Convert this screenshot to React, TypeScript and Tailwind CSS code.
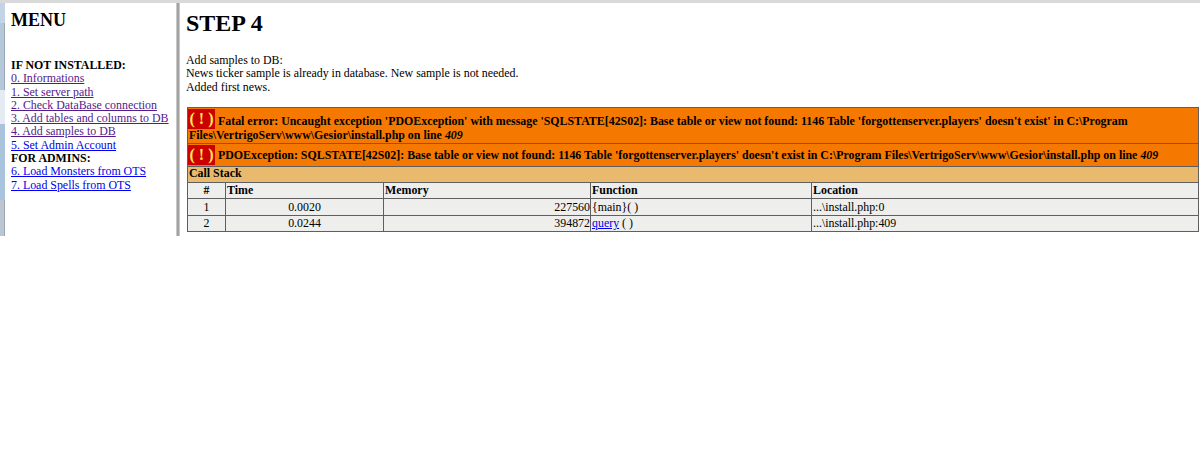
const menuTop = [
  ["0. Informations", true],
  ["1. Set server path", true],
  ["2. Check DataBase connection", true],
  ["3. Add tables and columns to DB", true],
  ["4. Add samples to DB", true],
  ["5. Set Admin Account", false],
] as const

const menuAdmin = ["6. Load Monsters from OTS", "7. Load Spells from OTS"]

function MenuLink({ label, visited }: { label: string; visited: boolean }) {
  return (
    <a href="#" className={visited ? "block h-[13.3px] underline text-[#551a8b]" : "block h-[13.3px] underline text-[#0000ee]"}>
      {label}
    </a>
  )
}

function ErrorIcon({ low }: { low?: boolean }) {
  return (
    <span className={low
      ? "-ml-[1px] inline-block h-[20px] w-[27px] bg-[#cc0000] text-center align-[-1px] text-[16px] leading-[20px] font-bold whitespace-nowrap text-[#fce94f]"
      : "-ml-[1px] inline-block h-[20px] w-[27px] bg-[#cc0000] text-center align-[1px] text-[16px] leading-[20px] font-bold whitespace-nowrap text-[#fce94f]"}>
      ( ! )
    </span>
  )
}

export default function App() {
  return (
    <div className="h-[468px] w-[1200px] overflow-hidden bg-white font-['Liberation_Serif',serif] text-[11.9px] leading-[13.3px] text-black">
      <div className="h-[3px] bg-[#d9d9d9]" />
      <div className="flex h-[233px]">
        {/* sliver of the window behind the page */}
        <div className="flex w-[5px] flex-col">
          <div className="h-[20px] bg-[#c3d4e6]" />
          <div className="h-[33px] border-r border-[#9aa7b4] bg-[#b5c8da]" />
          <div className="h-[34px] border-r border-[#9aa7b4] bg-[#b5c8da]" />
          <div className="h-[34px] bg-[#e4ebf2]" />
          <div className="h-[76px] bg-[#a9c3dc]" />
          <div className="flex-1 border-r border-[#9aa7b4] bg-[#bcc6d0]" />
        </div>
        <aside className="w-[171px] pl-[6px]">
          <h2 className="mt-[7px] text-[18px] leading-[20px] font-bold">MENU</h2>
          <div className="mt-[29px] font-bold">IF NOT INSTALLED:</div>
          {menuTop.map(([label, visited]) => (
            <MenuLink key={label} label={label} visited={visited} />
          ))}
          <div className="font-bold">FOR ADMINS:</div>
          {menuAdmin.map((label) => (
            <MenuLink key={label} label={label} visited={false} />
          ))}
        </aside>
        <div className="w-[4px] border-x border-[#c8c8c8] bg-[#a3a3a3]" />
        <main className="flex-1 pl-[6px]">
          <h1 className="mt-[7px] text-[24px] leading-[27px] font-bold">STEP 4</h1>
          <div className="mt-[17px]">
            <div>Add samples to DB:</div>
            <div>News ticker sample is already in database. New sample is not needed.</div>
            <div>Added first news.</div>
          </div>
          <table className="mt-[13px] ml-[1px] w-[1012px] table-fixed border-collapse border border-[#5f5f5f]">
            <colgroup>
              <col className="w-[38px]" />
              <col className="w-[158px]" />
              <col className="w-[207px]" />
              <col className="w-[221px]" />
              <col />
            </colgroup>
            <tbody>
              <tr className="bg-[#f57900]">
                <td colSpan={5} className="border border-[#5f5f5f] px-[1px] pt-[1px] pb-[1px] align-top leading-[13px] font-bold">
                  <ErrorIcon /> Fatal error: Uncaught exception 'PDOException' with message 'SQLSTATE[42S02]: Base table or view not found: 1146 Table 'forgottenserver.players' doesn't exist' in C:\Program Files\VertrigoServ\www\Gesior\install.php on line <i>409</i>
                </td>
              </tr>
              <tr className="bg-[#f57900]">
                <td colSpan={5} className="border border-[#5f5f5f] px-[1px] pt-[1px] pb-[1px] align-top leading-[14px] font-bold">
                  <ErrorIcon low /> PDOException: SQLSTATE[42S02]: Base table or view not found: 1146 Table 'forgottenserver.players' doesn't exist in C:\Program Files\VertrigoServ\www\Gesior\install.php on line <i>409</i>
                </td>
              </tr>
              <tr className="h-[16px] bg-[#e9b96e]">
                <th colSpan={5} className="border border-[#5f5f5f] px-[1px] pb-[2px] text-left font-bold">Call Stack</th>
              </tr>
              <tr className="h-[16px] bg-[#eeeeec]">
                <th className="border border-[#5f5f5f] px-[2px] text-center font-bold">#</th>
                <th className="border border-[#5f5f5f] px-[1px] text-left font-bold">Time</th>
                <th className="border border-[#5f5f5f] px-[1px] text-left font-bold">Memory</th>
                <th className="border border-[#5f5f5f] px-[1px] text-left font-bold">Function</th>
                <th className="border border-[#5f5f5f] px-[1px] text-left font-bold">Location</th>
              </tr>
              <tr className="h-[17px] bg-[#eeeeec]">
                <td className="border border-[#5f5f5f] text-center">1</td>
                <td className="border border-[#5f5f5f] text-center">0.0020</td>
                <td className="border border-[#5f5f5f] text-right">227560</td>
                <td className="border border-[#5f5f5f] px-[1px]">{"{main}"}( )</td>
                <td className="border border-[#5f5f5f] px-[1px]">...\install.php:0</td>
              </tr>
              <tr className="h-[16px] bg-[#eeeeec]">
                <td className="border border-[#5f5f5f] text-center">2</td>
                <td className="border border-[#5f5f5f] text-center">0.0244</td>
                <td className="border border-[#5f5f5f] text-right">394872</td>
                <td className="border border-[#5f5f5f] px-[1px]"><a href="#" className="underline text-[#0000ee]">query</a> ( )</td>
                <td className="border border-[#5f5f5f] px-[1px]">...\install.php:409</td>
              </tr>
            </tbody>
          </table>
        </main>
      </div>
    </div>
  )
}
